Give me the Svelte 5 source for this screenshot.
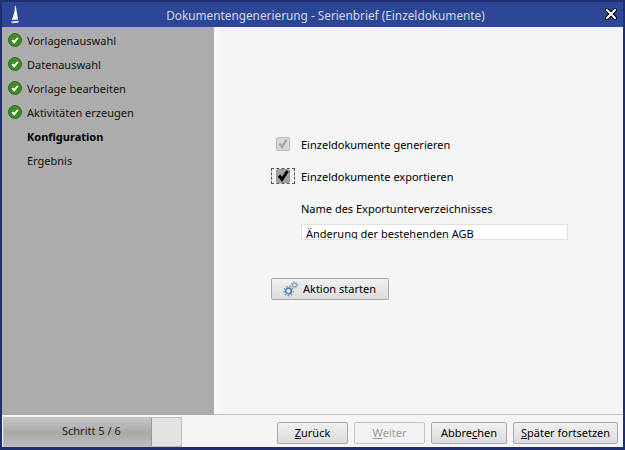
<script>
  const steps = [
    { label: "Vorlagenauswahl", done: true },
    { label: "Datenauswahl", done: true },
    { label: "Vorlage bearbeiten", done: true },
    { label: "Aktivitäten erzeugen", done: true },
    { label: "Konfiguration", current: true },
    { label: "Ergebnis" }
  ];
  let dirName = "Änderung der bestehenden AGB";
</script>

<div class="window">
  <div class="titlebar">
    <svg class="logo" width="12" height="20" viewBox="0 0 12 20">
      <path d="M6 1 L6.8 1 L9 14.5 L3 15 L5.4 7 Z" fill="#fff" />
      <path d="M2 16.5 L10 15.8 L9 17.8 L3 18.2 Z" fill="#dfe4f2" />
    </svg>
    <span class="title">Dokumentengenerierung - Serienbrief (Einzeldokumente)</span>
    <svg class="close" width="12" height="12" viewBox="0 0 12 12">
      <path d="M2 2 L10 10 M10 2 L2 10" stroke="#000" stroke-width="4" stroke-linecap="square" />
      <path d="M2 2 L10 10 M10 2 L2 10" stroke="#fff" stroke-width="2" stroke-linecap="square" />
    </svg>
  </div>

  <div class="main">
    <nav class="sidebar">
      {#each steps as s}
        <div class="step" class:current={s.current}>
          <span class="mark">
            {#if s.done}
              <svg width="14" height="14" viewBox="0 0 14 14">
                <circle cx="7" cy="7" r="6.5" fill="#3f8a26" stroke="#2f6f1c" />
                <path d="M4.2 7.2 L6.2 9.2 L9.8 4.8" fill="none" stroke="#fff" stroke-width="2" />
              </svg>
            {/if}
          </span>
          <span>{s.label}</span>
        </div>
      {/each}
    </nav>

    <section class="content">
      <div class="check-row">
        <span class="check-wrap">
          <span class="box disabled">
            <svg width="12" height="12" viewBox="0 0 12 12"><path d="M2.5 5.5 L5 9 L9.5 1.5" fill="none" stroke="#a8a8a8" stroke-width="2.4" /></svg>
          </span>
        </span>
        <span>Einzeldokumente generieren</span>
      </div>
      <div class="check-row second">
        <span class="check-wrap focused">
          <span class="box on">
            <svg width="12" height="12" viewBox="0 0 12 12"><path d="M2 5.5 L5 9.5 L10.5 1" fill="none" stroke="#000" stroke-width="3" /></svg>
          </span>
        </span>
        <span>Einzeldokumente exportieren</span>
      </div>
      <div class="field">
        <label for="dir">Name des Exportunterverzeichnisses</label>
        <input id="dir" type="text" bind:value={dirName} />
      </div>
      <button class="btn action">
        <svg width="18" height="18" viewBox="0 0 18 18">
          <circle cx="5.5" cy="11" r="4.6" fill="none" stroke="#8a8f96" stroke-width="1.3" stroke-dasharray="1.6 1.5" />
          <circle cx="5.5" cy="11" r="2.8" fill="#e8eef4" stroke="#5086bb" stroke-width="1.7" />
          <circle cx="11.5" cy="5" r="3.2" fill="none" stroke="#a0a5ac" stroke-width="1.1" stroke-dasharray="1.4 1.2" />
          <circle cx="11.5" cy="5" r="1.9" fill="#eef2f6" stroke="#7da2c6" stroke-width="1.2" />
        </svg>
        Aktion starten
      </button>
    </section>
  </div>

  <div class="footer">
    <div class="progress">
      <div class="progress-bar"></div>
      <span class="progress-label">Schritt 5 / 6</span>
    </div>
    <div class="buttons">
      <button class="btn w71"><u>Z</u>urück</button>
      <button class="btn w71" disabled><u>W</u>eiter</button>
      <button class="btn w76">Abbre<u>c</u>hen</button>
      <button class="btn w105"><u>S</u>päter fortsetzen</button>
    </div>
  </div>
</div>

<style>
  :global(body) { margin: 0; }
  .window {
    width: 625px; height: 450px; box-sizing: border-box;
    display: flex; flex-direction: column;
    border: 2px solid #1f2f70; border-bottom-width: 3px;
    background: #f5f5f5;
    font-family: "Noto Sans", sans-serif; font-size: 11px; color: #000;
  }
  .titlebar {
    height: 25px; flex: none; position: relative;
    display: flex; align-items: center; justify-content: center;
    background: #2d4696; color: #d4d9e8; font-size: 11.8px;
  }
  .logo { position: absolute; left: 7px; top: 3px; }
  .close { position: absolute; right: 6px; top: 6px; }
  .title { padding-left: 26px; }
  .main { flex: 1; display: flex; min-height: 0; }
  .sidebar { width: 212px; flex: none; background: #acacac; padding-top: 1px; box-sizing: border-box; border-bottom: 1px solid #a8a8a8; }
  .step { height: 24px; display: flex; align-items: center; gap: 4px; padding-left: 6px; color: #111; }
  .step.current { font-weight: bold; color: #000; }
  .mark { width: 15px; height: 14px; display: block; flex: none; }
  .mark svg { display: block; }
  .content { flex: 1; padding: 107px 0 0 57px; border-bottom: 1px solid #c0c0c0; background: linear-gradient(90deg, #fbfbfb, #f5f5f5 8px); }
  .check-row { display: flex; align-items: center; gap: 6px; height: 20px; }
  .check-row.second { margin-top: 12px; }
  .check-wrap { width: 24px; height: 16px; display: flex; align-items: center; justify-content: center; border: 1px dashed transparent; box-sizing: border-box; }
  .check-wrap.focused { border-color: #555; }
  .box { width: 12px; height: 12px; border: 1px solid #bbb; border-radius: 2px; background: #d8d8d8; display: flex; flex: none; }
  .box svg { overflow: visible; }
  .box.on { background: #a2a2a2; border-color: #999; }
  .field { margin: 15px 0 0 30px; width: 267px; display: flex; flex-direction: column; gap: 8px; }
  input {
    height: 16px; padding: 2px 3px 0 4px; box-sizing: border-box; border: 1px solid #e0e0e0; background: #fff;
    font: inherit; color: #000; outline: none; width: 267px;
  }
  .btn {
    height: 22px; padding: 0 0 2px; box-sizing: border-box; font: inherit; color: #000;
    border: 1px solid #a9a9a9; border-radius: 2px;
    background: linear-gradient(#f0f0f0, #dcdcdc);
    display: inline-flex; align-items: center; justify-content: center;
  }
  .btn:disabled { color: #999; background: #f2f2f2; border-color: #c4c4c4; }
  .action { margin-top: 38px; width: 118px; gap: 2px; justify-content: flex-start; padding-left: 11px; }
  .action svg { margin-top: 2px; }
  .footer { height: 32px; flex: none; display: flex; align-items: flex-start; justify-content: space-between; padding-right: 5px; }
  .progress { position: relative; width: 179px; height: 30px; margin: 2px 0 0 1px; background: #e2e2e2; border: 1px solid #bdbdbd; box-sizing: border-box; }
  .progress-bar { width: 147px; height: 100%; background: linear-gradient(#c6c6c6, #a8a8a8 50%, #bcbcbc); border-right: 1px solid #999; }
  .progress-label { position: absolute; left: 58px; top: 5px; color: #222; }
  .buttons { display: flex; gap: 6px; margin-top: 7px; }
  .w71 { width: 71px; }
  .w76 { width: 76px; }
  .w105 { width: 105px; }
</style>
